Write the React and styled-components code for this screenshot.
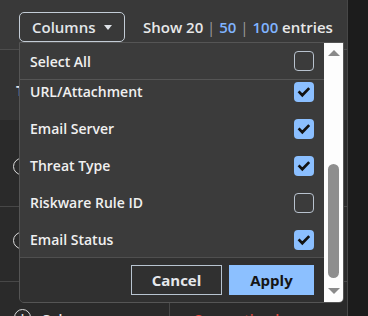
import styled, { createGlobalStyle } from 'styled-components';

const Global = createGlobalStyle`
  html, body { margin: 0; padding: 0; background: #1c1c1c; }
  body { font-family: 'Open Sans', 'Liberation Sans', sans-serif; overflow: hidden; }
  * { box-sizing: border-box; }
`;

const columns = [
  { name: 'URL/Attachment', on: true },
  { name: 'Email Server', on: true },
  { name: 'Threat Type', on: true },
  { name: 'Riskware Rule ID', on: false },
  { name: 'Email Status', on: true },
];

function Check({ on }) {
  return (
    <Box $on={on}>
      {on && (
        <svg width="20" height="20" viewBox="0 0 20 20">
          <path d="M4.6 9.4 L8.3 13.2 L15.2 6.1" fill="none" stroke="#121212" strokeWidth="2.7" />
        </svg>
      )}
    </Box>
  );
}

export default function App() {
  return (
    <Page>
      <Global />
      <Main>
        <Toolbar>
          <ColumnsWrap>
            <ColumnsButton>
              Columns <Caret />
            </ColumnsButton>
            <Dropdown>
              <Panel>
                <SelectAll>
                  <span>Select All</span>
                  <Check on={false} />
                </SelectAll>
                <List>
                  <Scrolled>
                    {columns.map((c) => (
                      <Item key={c.name}>
                        <span>{c.name}</span>
                        <Check on={c.on} />
                      </Item>
                    ))}
                  </Scrolled>
                </List>
                <Footer>
                  <CancelButton>Cancel</CancelButton>
                  <ApplyButton>Apply</ApplyButton>
                </Footer>
              </Panel>
              <Scrollbar>
                <ArrowUp />
                <Thumb />
                <ArrowDown />
              </Scrollbar>
            </Dropdown>
          </ColumnsWrap>
          <ShowText>
            Show 20 <Sep>|</Sep> <Num>50</Num> <Sep>|</Sep> <Num>100</Num> entries
          </ShowText>
        </Toolbar>
        <HeaderRow>Time</HeaderRow>
        <Row $pad={38}><Circle /></Row>
        <Row $pad={25}><Circle /></Row>
        <LastRow>
          <FirstCell>
            <Circle>+</Circle>
            <CellText>Columns</CellText>
          </FirstCell>
          <StatusCell>Quarantined</StatusCell>
        </LastRow>
      </Main>
      <Gutter />
    </Page>
  );
}

const Page = styled.div`
  display: flex;
  width: 368px;
  height: 316px;
  overflow: hidden;
`;

const Main = styled.div`
  width: 348px;
  flex-shrink: 0;
  background: #2a2a2a;
  border-right: 1px solid #474747;
  display: flex;
  flex-direction: column;
`;

const Gutter = styled.div`
  flex: 1;
  background: #1c1c1c;
`;

const Toolbar = styled.div`
  height: 50px;
  flex-shrink: 0;
  background: #393939;
  border-bottom: 1px solid #4d4d4d;
  display: flex;
  align-items: flex-start;
  gap: 18px;
  padding: 12px 0 0 19px;
  position: relative;
  z-index: 2;
`;

const ColumnsWrap = styled.div`
  position: relative;
`;

const ColumnsButton = styled.div`
  width: 106px;
  height: 30px;
  border: 1px solid #c3ccd6;
  border-radius: 5px;
  display: flex;
  align-items: center;
  padding-left: 12px;
  color: #e2e6ea;
  font-size: 15px;
  font-weight: 600;
`;

const Caret = styled.span`
  width: 0;
  height: 0;
  margin-left: 8px;
  border-left: 4.5px solid transparent;
  border-right: 4.5px solid transparent;
  border-top: 5px solid #dfe3e8;
`;

const ShowText = styled.div`
  line-height: 30px;
  color: #e8e8e8;
  font-size: 15px;
  font-weight: 600;
  white-space: nowrap;
`;

const Num = styled.span`
  color: #80b4ff;
`;

const Sep = styled.span`
  color: #9c9c9c;
  font-weight: 400;
`;

const Dropdown = styled.div`
  position: absolute;
  left: 0;
  top: 30px;
  width: 325px;
  height: 261px;
  background: #3b3b3b;
  border: 1px solid #555;
  border-radius: 0 0 5px 5px;
  overflow: hidden;
  display: flex;
`;

const Panel = styled.div`
  flex: 1;
  display: flex;
  flex-direction: column;
  min-width: 0;
`;

const SelectAll = styled.div`
  height: 37px;
  flex-shrink: 0;
  border-bottom: 1px solid #555;
  display: flex;
  align-items: center;
  justify-content: space-between;
  padding: 0 10px;
  color: #f0f0f0;
  font-size: 14px;
  font-weight: 600;
`;

const List = styled.div`
  flex: 1;
  overflow: hidden;
`;

const Scrolled = styled.div`
  margin-top: -7px;
`;

const Item = styled.div`
  height: 37px;
  display: flex;
  align-items: center;
  justify-content: space-between;
  padding: 0 10px;
  color: #f0f0f0;
  font-size: 14px;
  font-weight: 600;
`;

const Box = styled.div`
  width: 20px;
  height: 20px;
  border-radius: 4px;
  background: ${(p) => (p.$on ? '#8bbfff' : 'transparent')};
  border: ${(p) => (p.$on ? 'none' : '1.5px solid #b8c2ce')};
  display: flex;
  align-items: center;
  justify-content: center;
`;

const Footer = styled.div`
  flex-shrink: 0;
  background: #303030;
  border-top: 1px solid #4f4f4f;
  display: flex;
  justify-content: flex-end;
  gap: 7px;
  padding: 7px 10px;
`;

const CancelButton = styled.div`
  width: 91px;
  height: 30px;
  border: 1px solid #b8c4d0;
  display: flex;
  align-items: center;
  justify-content: center;
  color: #e6e8ec;
  font-size: 15px;
  font-weight: 700;
`;

const ApplyButton = styled.div`
  width: 85px;
  height: 30px;
  background: #8cc0ff;
  display: flex;
  align-items: center;
  justify-content: center;
  color: #151515;
  font-size: 15px;
  font-weight: 700;
`;

const Scrollbar = styled.div`
  width: 19px;
  flex-shrink: 0;
  background: #fdfdfd;
  display: flex;
  flex-direction: column;
  align-items: center;
  padding: 7px 0 8px;
`;

const ArrowUp = styled.div`
  width: 0;
  height: 0;
  border-left: 6.5px solid transparent;
  border-right: 6.5px solid transparent;
  border-bottom: 6px solid #8a8a8a;
`;

const ArrowDown = styled.div`
  width: 0;
  height: 0;
  margin-top: 10px;
  border-left: 6.5px solid transparent;
  border-right: 6.5px solid transparent;
  border-top: 6px solid #8a8a8a;
`;

const Thumb = styled.div`
  margin-top: auto;
  width: 11px;
  height: 114px;
  border-radius: 6px;
  background: #8e8e8e;
`;

const HeaderRow = styled.div`
  height: 70px;
  flex-shrink: 0;
  background: #333;
  padding: 31px 0 0 16px;
  color: #e0e0e0;
  font-size: 14px;
  font-weight: 700;
  line-height: 20px;
`;

const Row = styled.div`
  flex-shrink: 0;
  height: ${(p) => (p.$pad === 38 ? 87 : 75)}px;
  border-bottom: 1px solid #474747;
  padding: ${(p) => p.$pad}px 0 0 13px;
`;

const Circle = styled.div`
  width: 17px;
  height: 17px;
  border: 1.5px solid #dcdcdc;
  border-radius: 50%;
  display: flex;
  align-items: center;
  justify-content: center;
  color: #dcdcdc;
  font-size: 14px;
  font-weight: 700;
  line-height: 1;
`;

const LastRow = styled.div`
  flex: 1;
  display: flex;
`;

const FirstCell = styled.div`
  width: 170px;
  border-right: 1px solid #474747;
  display: flex;
  align-items: flex-start;
  gap: 10px;
  padding: 27px 0 0 14px;
`;

const CellText = styled.span`
  color: #e8e8e8;
  font-size: 14px;
  font-weight: 600;
  line-height: 20px;
  margin-top: 1px;
`;

const StatusCell = styled.div`
  padding: 28px 0 0 23px;
  color: #e5483c;
  font-size: 14px;
  font-weight: 600;
  line-height: 20px;
`;
